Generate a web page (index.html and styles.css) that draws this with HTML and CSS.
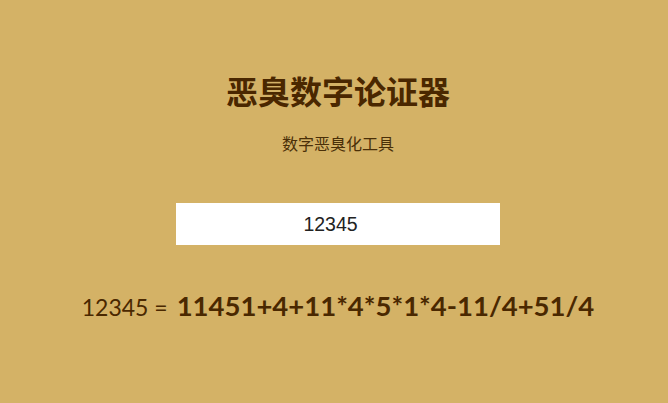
FILE: index.html
```html
<!DOCTYPE html>
<html lang="zh">
<head>
<meta charset="utf-8">
<title>恶臭数字论证器</title>
<link rel="stylesheet" href="styles.css">
</head>
<body>
<main class="app">
  <h1 class="title">恶臭数字论证器</h1>
  <p class="subtitle">数字恶臭化工具</p>
  <input class="num-input" type="text" value="12345">
  <div class="result">
    <span class="result-num">12345 =</span>
    <span class="result-expr">11451+4+11*4*5*1*4-11/4+51/4</span>
  </div>
</main>
</body>
</html>
```
FILE: styles.css
```css
html, body {
  margin: 0;
  padding: 0;
  height: 100%;
}
body {
  background: #d4b266;
  padding-left: 8px;
  box-sizing: border-box;
  font-family: "Noto Sans CJK SC", "Noto Sans", sans-serif;
}
.app {
  display: flex;
  flex-direction: column;
  align-items: center;
  padding-top: 70px;
}
.title {
  margin: 0;
  font-size: 32px;
  line-height: 40px;
  font-weight: 700;
  color: #4a2700;
}
.subtitle {
  margin: 21px 0 0;
  font-size: 16px;
  line-height: 24px;
  color: #4a2f08;
}
.num-input {
  margin-top: 48px;
  width: 324px;
  height: 42px;
  box-sizing: border-box;
  border: none;
  outline: none;
  background: #ffffff;
  text-align: center;
  font-family: "Liberation Sans", Arial, sans-serif;
  font-size: 19.5px;
  color: #222222;
  padding: 0 15px 0 0;
}
.result {
  margin-top: 41px;
  line-height: 40px;
  color: #4a2800;
  font-family: Lato, "DejaVu Sans", sans-serif;
  white-space: nowrap;
  display: flex;
  align-items: baseline;
  gap: 9px;
}
.result-num {
  font-size: 23px;
}
.result-expr {
  font-size: 27.5px;
  font-weight: 700;
}
```
